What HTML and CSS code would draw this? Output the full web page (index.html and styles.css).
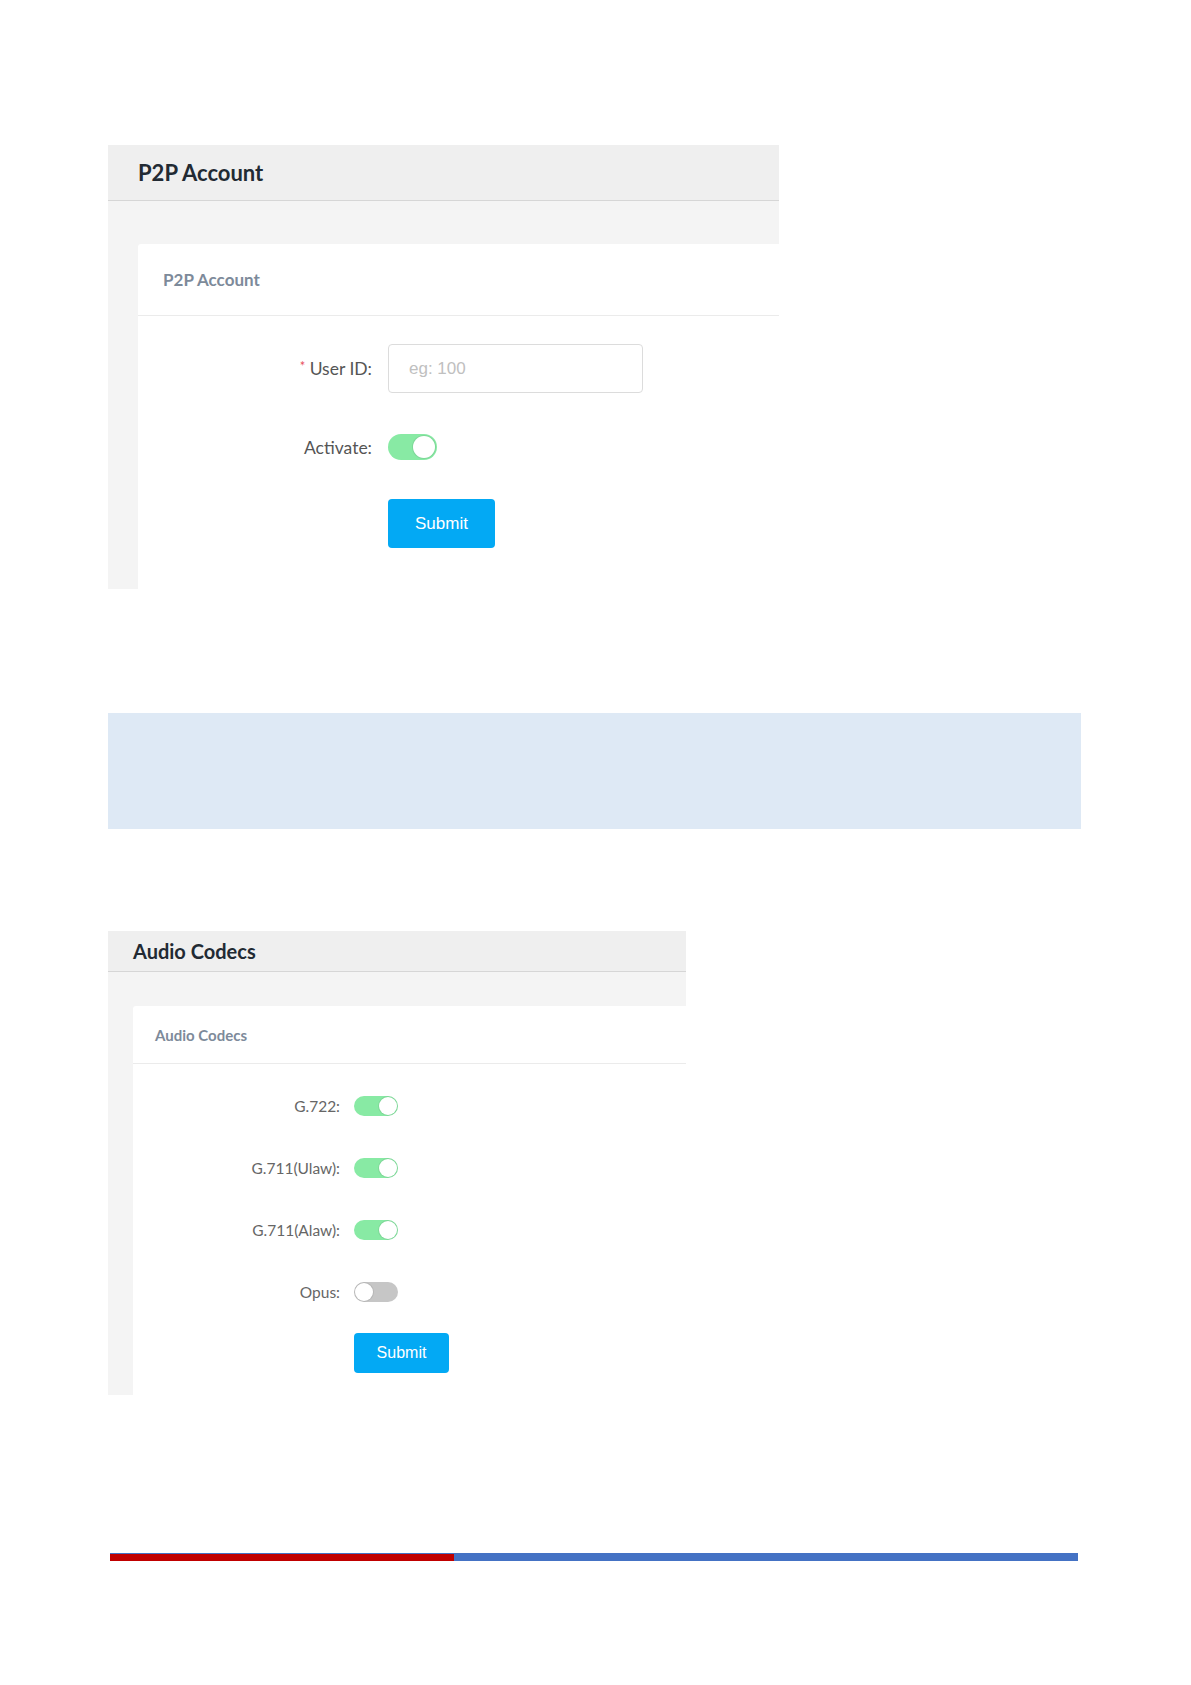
FILE: index.html
```html
<!DOCTYPE html>
<html lang="en">
<head>
    <meta charset="UTF-8">
    <meta name="viewport" content="width=device-width, initial-scale=1.0">
    <title>P2P Account / Audio Codecs</title>
    <link rel="stylesheet" href="styles.css">
</head>
<body>
    <div class="page">
        <!-- P2P 账号 -->
        <div class="panel p2p">
            <div class="panel-head">P2P Account</div>
            <div class="panel-body">
                <div class="card">
                    <div class="card-head">P2P Account</div>
                    <div class="form">
                        <div class="row row-input">
                            <label class="label"><span class="req">*</span> User ID:</label>
                            <input class="input" type="text" placeholder="eg: 100">
                        </div>
                        <div class="row row-switch">
                            <label class="label">Activate:</label>
                            <span class="switch on"></span>
                        </div>
                        <div class="row row-btn">
                            <span></span>
                            <button class="btn">Submit</button>
                        </div>
                    </div>
                </div>
            </div>
        </div>

        <div class="note"></div>

        <!-- 音频编码 -->
        <div class="panel codecs">
            <div class="panel-head">Audio Codecs</div>
            <div class="panel-body">
                <div class="card">
                    <div class="card-head">Audio Codecs</div>
                    <div class="form">
                        <div class="row">
                            <label class="label">G.722:</label>
                            <span class="switch on"></span>
                        </div>
                        <div class="row">
                            <label class="label">G.711(Ulaw):</label>
                            <span class="switch on"></span>
                        </div>
                        <div class="row">
                            <label class="label">G.711(Alaw):</label>
                            <span class="switch on"></span>
                        </div>
                        <div class="row">
                            <label class="label">Opus:</label>
                            <span class="switch"></span>
                        </div>
                        <div class="row row-btn">
                            <span></span>
                            <button class="btn">Submit</button>
                        </div>
                    </div>
                </div>
            </div>
        </div>

        <div class="footer-bar">
            <div class="bar-red"></div>
            <div class="bar-blue"></div>
        </div>
    </div>
</body>
</html>
```

FILE: styles.css
```css
*{
    margin:0;
    padding:0;
    box-sizing:border-box;
}
body{
    background:#fff;
    font-family:Lato, "Noto Sans", sans-serif;
}
.page{
    padding:145px 0 0 108px;
    width:1081px;
    display:flex;
    flex-direction:column;
    align-items:flex-start;
}

/* 面板 */
.panel{
    display:flex;
    flex-direction:column;
}
.panel-head{
    background:#efefef;
    border-bottom:1px solid #d6d6d6;
    color:#222a33;
    font-weight:700;
    display:flex;
    align-items:center;
}
.panel-body{
    background:#f4f4f4;
}
.card{
    background:#fff;
    border-radius:3px 0 0 0;
}
.card-head{
    border-bottom:1px solid #ebebeb;
    color:#7d8a9a;
    font-weight:700;
    display:flex;
    align-items:center;
}
.form{
    display:flex;
    flex-direction:column;
}
.row{
    display:grid;
    align-items:center;
}
.label{
    text-align:right;
    color:#555;
}
.req{
    color:#e8505b;
    font-size:13px;
    vertical-align:top;
}

/* 开关 */
.switch{
    display:block;
    position:relative;
    background:#c6c6c6;
    border-radius:999px;
}
.switch::after{
    content:'';
    position:absolute;
    top:1px;
    left:1px;
    background:#fff;
    border-radius:50%;
    box-shadow:0 0 0 1px rgba(0,0,0,0.08);
}
.switch.on{
    background:#88eaa4;
}
.switch.on::after{
    left:auto;
    right:1px;
}

.btn{
    background:#03a9f4;
    color:#fff;
    border:none;
    border-radius:4px;
    font-family:"Liberation Sans", Arial, sans-serif;
}
.input{
    border:1px solid #dcdcdc;
    border-radius:4px;
    font-family:"Liberation Sans", Arial, sans-serif;
    outline:none;
}
.input::placeholder{
    color:#c0c0c0;
}

/* P2P 尺寸 */
.p2p{
    width:671px;
}
.p2p .panel-head{
    height:56px;
    padding-left:30px;
    font-size:22px;
}
.p2p .panel-body{
    padding:43px 0 0 30px;
}
.p2p .card-head{
    height:72px;
    padding-left:25px;
    font-size:17px;
}
.p2p .form{
    padding:28px 0 41px;
}
.p2p .row{
    grid-template-columns:234px 255px;
    column-gap:16px;
    font-size:17.5px;
}
.p2p .row-switch{
    margin-top:41px;
}
.p2p .row-btn{
    margin-top:39px;
}
.p2p .input{
    height:49px;
    padding-left:20px;
    font-size:17px;
}
.p2p .switch{
    width:49px;
    height:26px;
}
.p2p .switch::after{
    top:2px;
    width:22px;
    height:22px;
}
.p2p .switch.on::after{
    right:2px;
}
.p2p .btn{
    width:107px;
    height:49px;
    font-size:17px;
}

/* 提示框 */
.note{
    margin-top:124px;
    width:973px;
    height:116px;
    background:#dee9f5;
}

/* 音频编码尺寸 */
.codecs{
    margin-top:102px;
    width:578px;
}
.codecs .panel-head{
    height:41px;
    padding-left:25px;
    font-size:20px;
}
.codecs .panel-body{
    padding:34px 0 0 25px;
}
.codecs .card-head{
    height:58px;
    padding-left:22px;
    font-size:15px;
}
.codecs .form{
    padding:32px 0 22px;
}
.codecs .row{
    grid-template-columns:207px 44px;
    column-gap:14px;
    font-size:15.5px;
    height:20px;
    margin-bottom:42px;
}
.codecs .label{
    color:#666;
}
.codecs .row-btn{
    grid-template-columns:207px 95px;
    height:40px;
    margin:-11px 0 0;
}
.codecs .switch{
    width:44px;
    height:20px;
}
.codecs .switch::after{
    width:18px;
    height:18px;
}
.codecs .btn{
    width:95px;
    height:40px;
    font-size:16px;
}

/* 页脚色条 */
.footer-bar{
    margin:158px 0 0 2px;
    width:968px;
    height:8px;
    display:flex;
}
.bar-red{
    width:344px;
    background:#c00000;
    border-top:1px solid #4472c4;
}
.bar-blue{
    flex:1;
    background:#4472c4;
}
```
